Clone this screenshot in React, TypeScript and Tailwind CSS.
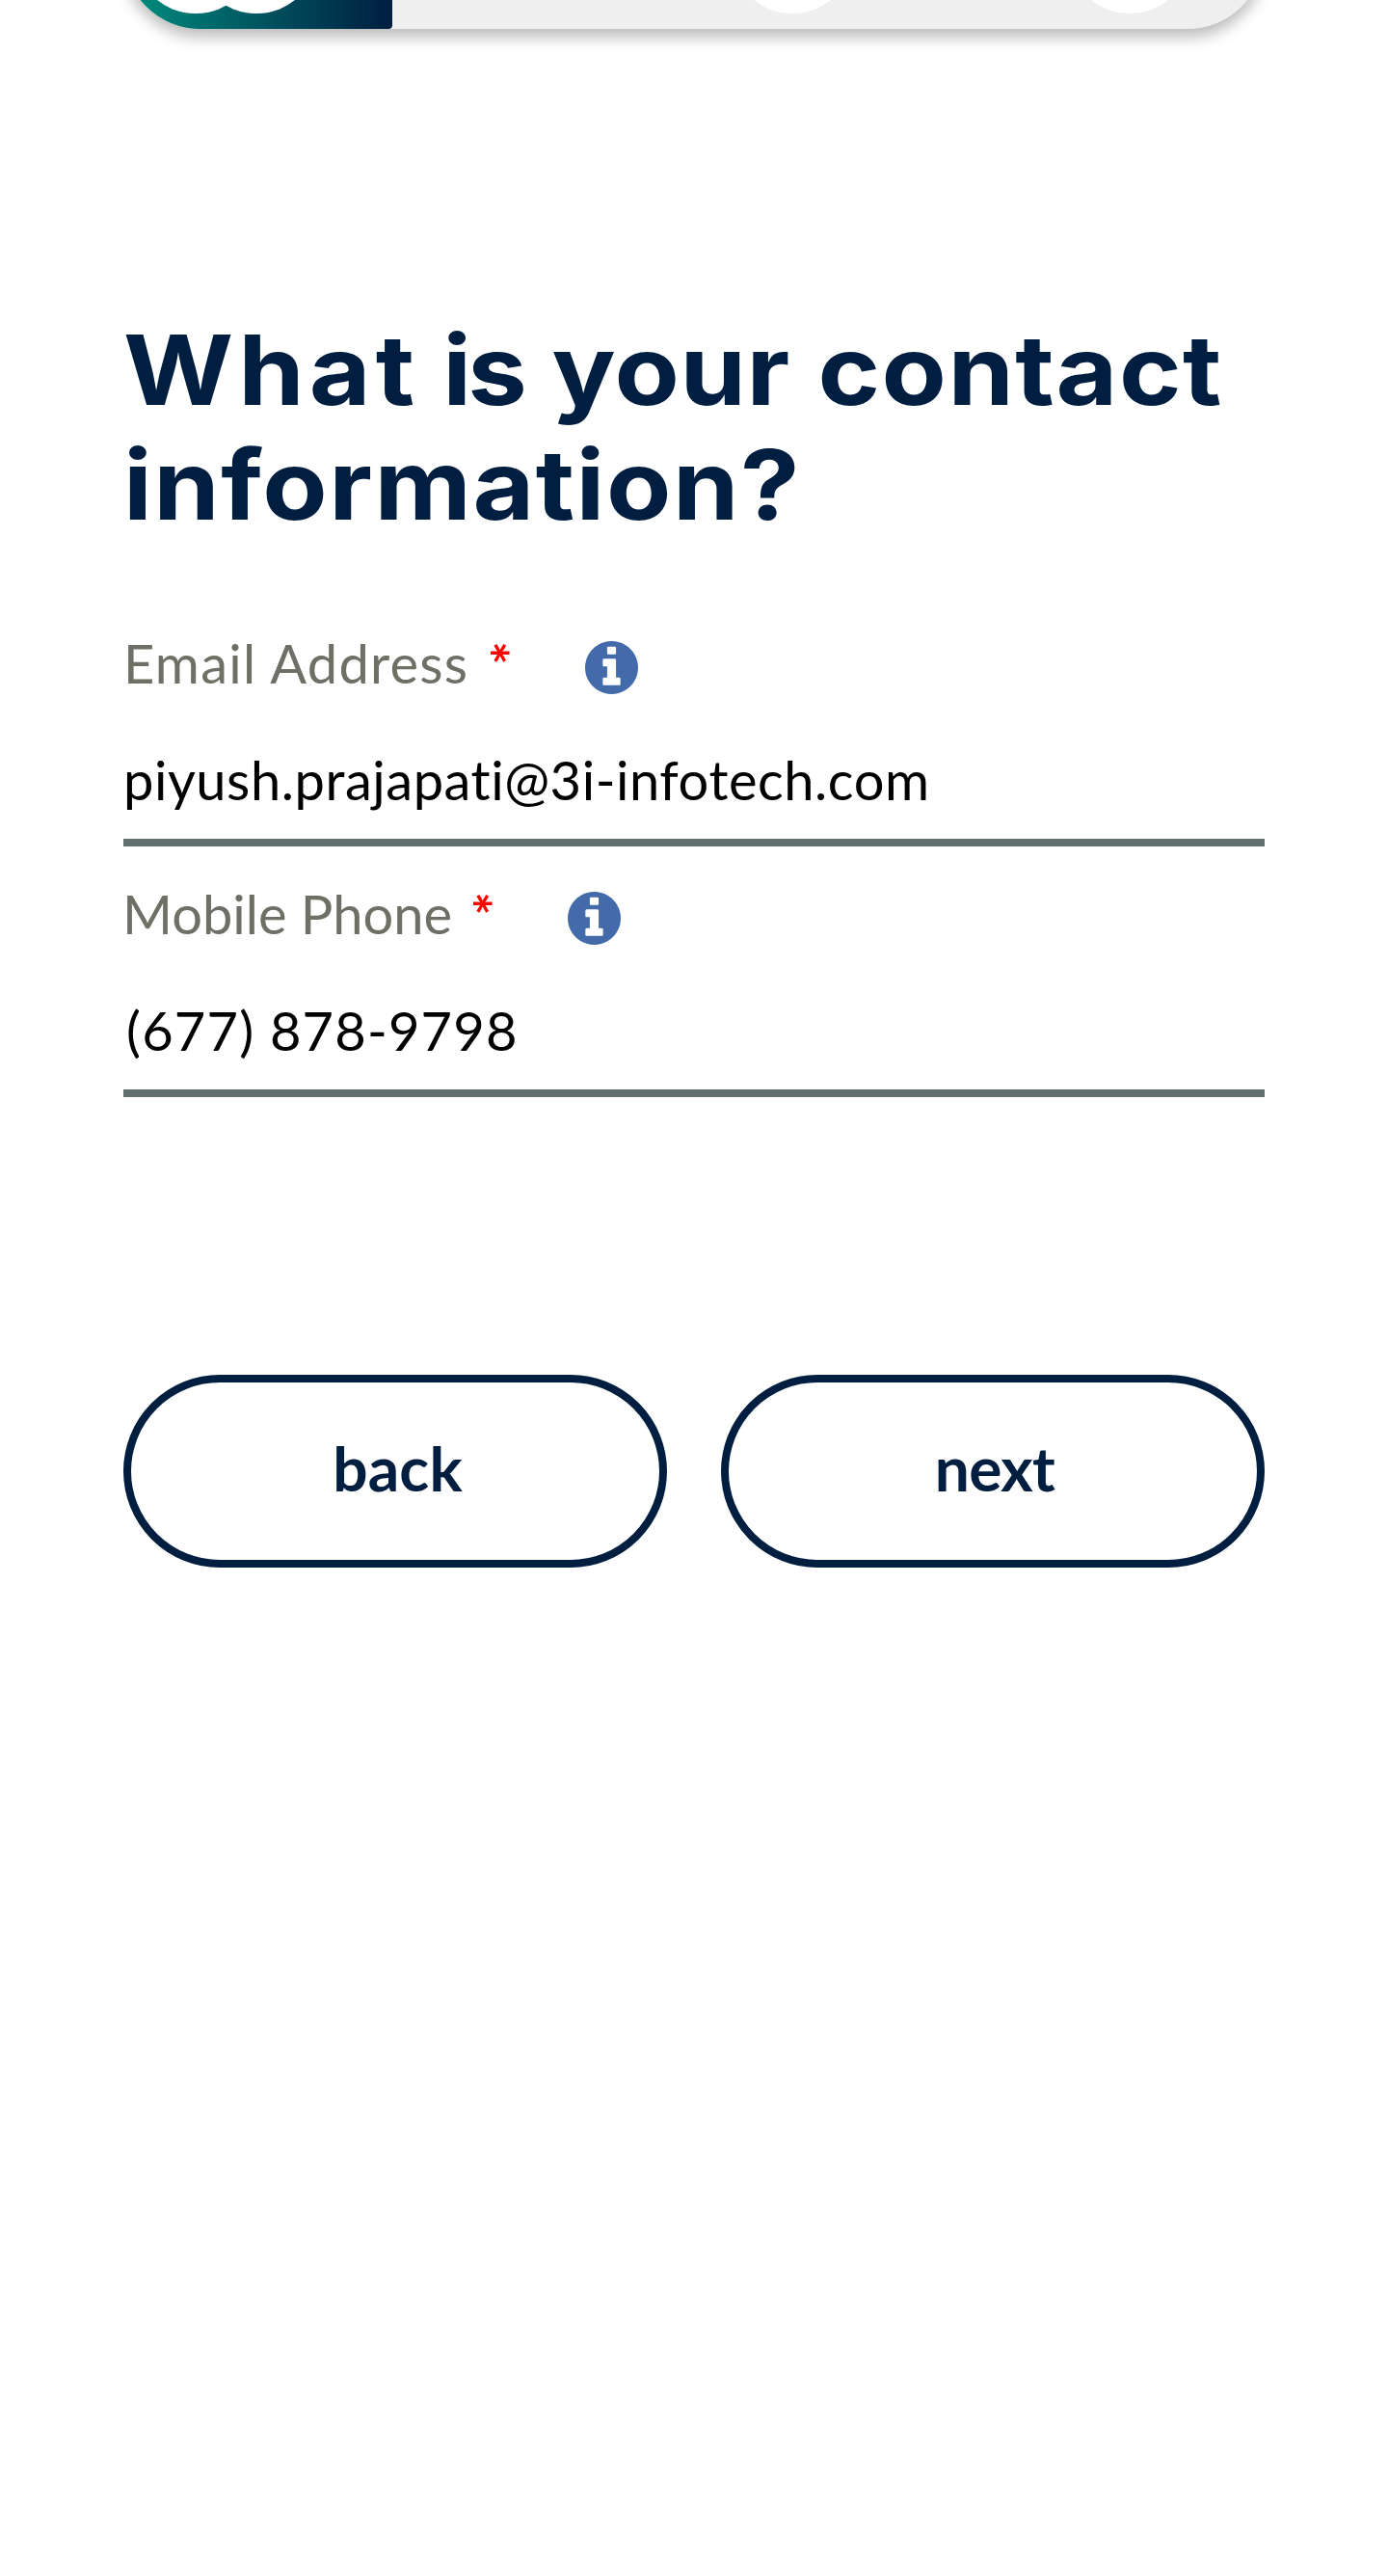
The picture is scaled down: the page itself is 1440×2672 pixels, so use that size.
function InfoIcon({ className }: { className: string }) {
  return (
    <svg viewBox="0 0 1536 1536" fill="currentColor" className={className} aria-hidden="true">
      <path d="M1024 1248v-160q0-14-9-23t-23-9h-96v-512q0-14-9-23t-23-9h-320q-14 0-23 9t-9 23v160q0 14 9 23t23 9h96v320h-96q-14 0-23 9t-9 23v160q0 14 9 23t23 9h448q14 0 23-9t9-23zm-128-896v-160q0-14-9-23t-23-9h-192q-14 0-23 9t-9 23v160q0 14 9 23t23 9h192q14 0 23-9t9-23zm640 416q0 209-103 385.5t-279.5 279.5-385.5 103-385.5-103-279.5-279.5-103-385.5 103-385.5 279.5-279.5 385.5-103 385.5 103 279.5 279.5 103 385.5z" />
    </svg>
  );
}

function Progress() {
  return (
    <div className="flex h-[60px] items-end overflow-hidden px-32 pb-[30px]">
      <div className="relative h-40 w-full shrink-0 rounded-full bg-[#efefef] shadow-[0_8px_16px_rgba(0,0,0,0.28)]">
        <div className="h-full overflow-hidden rounded-full">
          <div className="h-full w-[279px] rounded-br-[4px] bg-linear-to-r from-[#00917f] to-[#001e40]" />
        </div>
        <span className="absolute top-4 left-[11px] size-32 rounded-full bg-white" />
        <span className="absolute top-4 left-[74px] size-32 rounded-full bg-white" />
        <span className="absolute top-4 left-[630px] size-32 rounded-full bg-white" />
        <span className="absolute top-4 left-[980px] size-32 rounded-full bg-white" />
      </div>
    </div>
  );
}

type FieldProps = { label: string; value: string; labelClass: string; valueClass: string };

function Field({ label, value, labelClass, valueClass }: FieldProps) {
  return (
    <div className="flex h-[260px] flex-col border-b-8 border-[#646f70] pt-[42px] text-[56px] leading-[56px] whitespace-nowrap">
      <div className="flex h-[56px] items-start">
        <span className={labelClass}>{label}</span>
        <span className="mt-[5px] ml-px h-[28px] w-[28px] rotate-90 text-[58px] leading-[28px] font-bold text-[#ff0000]">*</span>
        <InfoIcon className="mt-[5px] ml-[86px] size-[55px] text-[#436baa]" />
      </div>
      <div className={valueClass}>{value}</div>
    </div>
  );
}

export default function App() {
  return (
    <div className="min-h-[2672px] w-full bg-white font-['Lato',sans-serif]">
      <Progress />
      <main className="px-32 pt-[264px]">
        <h1 className="origin-left scale-x-110 font-['Inter',sans-serif] text-[100px] leading-[119px] font-bold whitespace-nowrap text-[#001e40]">
          <div className="flex">
            <span className="tracking-[4.6px]">What</span>
            <span className="ml-[22px] tracking-[-3.5px]">is</span>
            <span className="ml-[27px] tracking-[0.5px]">your</span>
            <span className="ml-[26px] tracking-[1.3px]">contact</span>
          </div>
          <div className="tracking-[1.4px]">information?</div>
        </h1>
        <form className="mt-[56px]">
          <Field
            label="Email Address"
            value="piyush.prajapati@3i-infotech.com"
            labelClass="w-[364px] tracking-[1.27px] text-[#706f66]"
            valueClass="mt-[65px] tracking-[0.55px] text-black"
          />
          <Field
            label="Mobile Phone"
            value="(677) 878-9798"
            labelClass="-ml-px w-[347px] text-[#706f66]"
            valueClass="mt-[65px] ml-[3px] tracking-[1.2px] text-black"
          />
          <div className="mt-[288px] grid grid-cols-2 gap-14 text-[64px] font-bold text-[#001e40]">
            <button type="button" className="h-[200px] rounded-full border-8 border-[#001e40] pb-[6px] pl-[5px] tracking-[0.2px]">back</button>
            <button type="button" className="h-[200px] rounded-full border-8 border-[#001e40] pb-[6px] pl-[4px] tracking-[-0.6px]">next</button>
          </div>
        </form>
      </main>
    </div>
  );
}
